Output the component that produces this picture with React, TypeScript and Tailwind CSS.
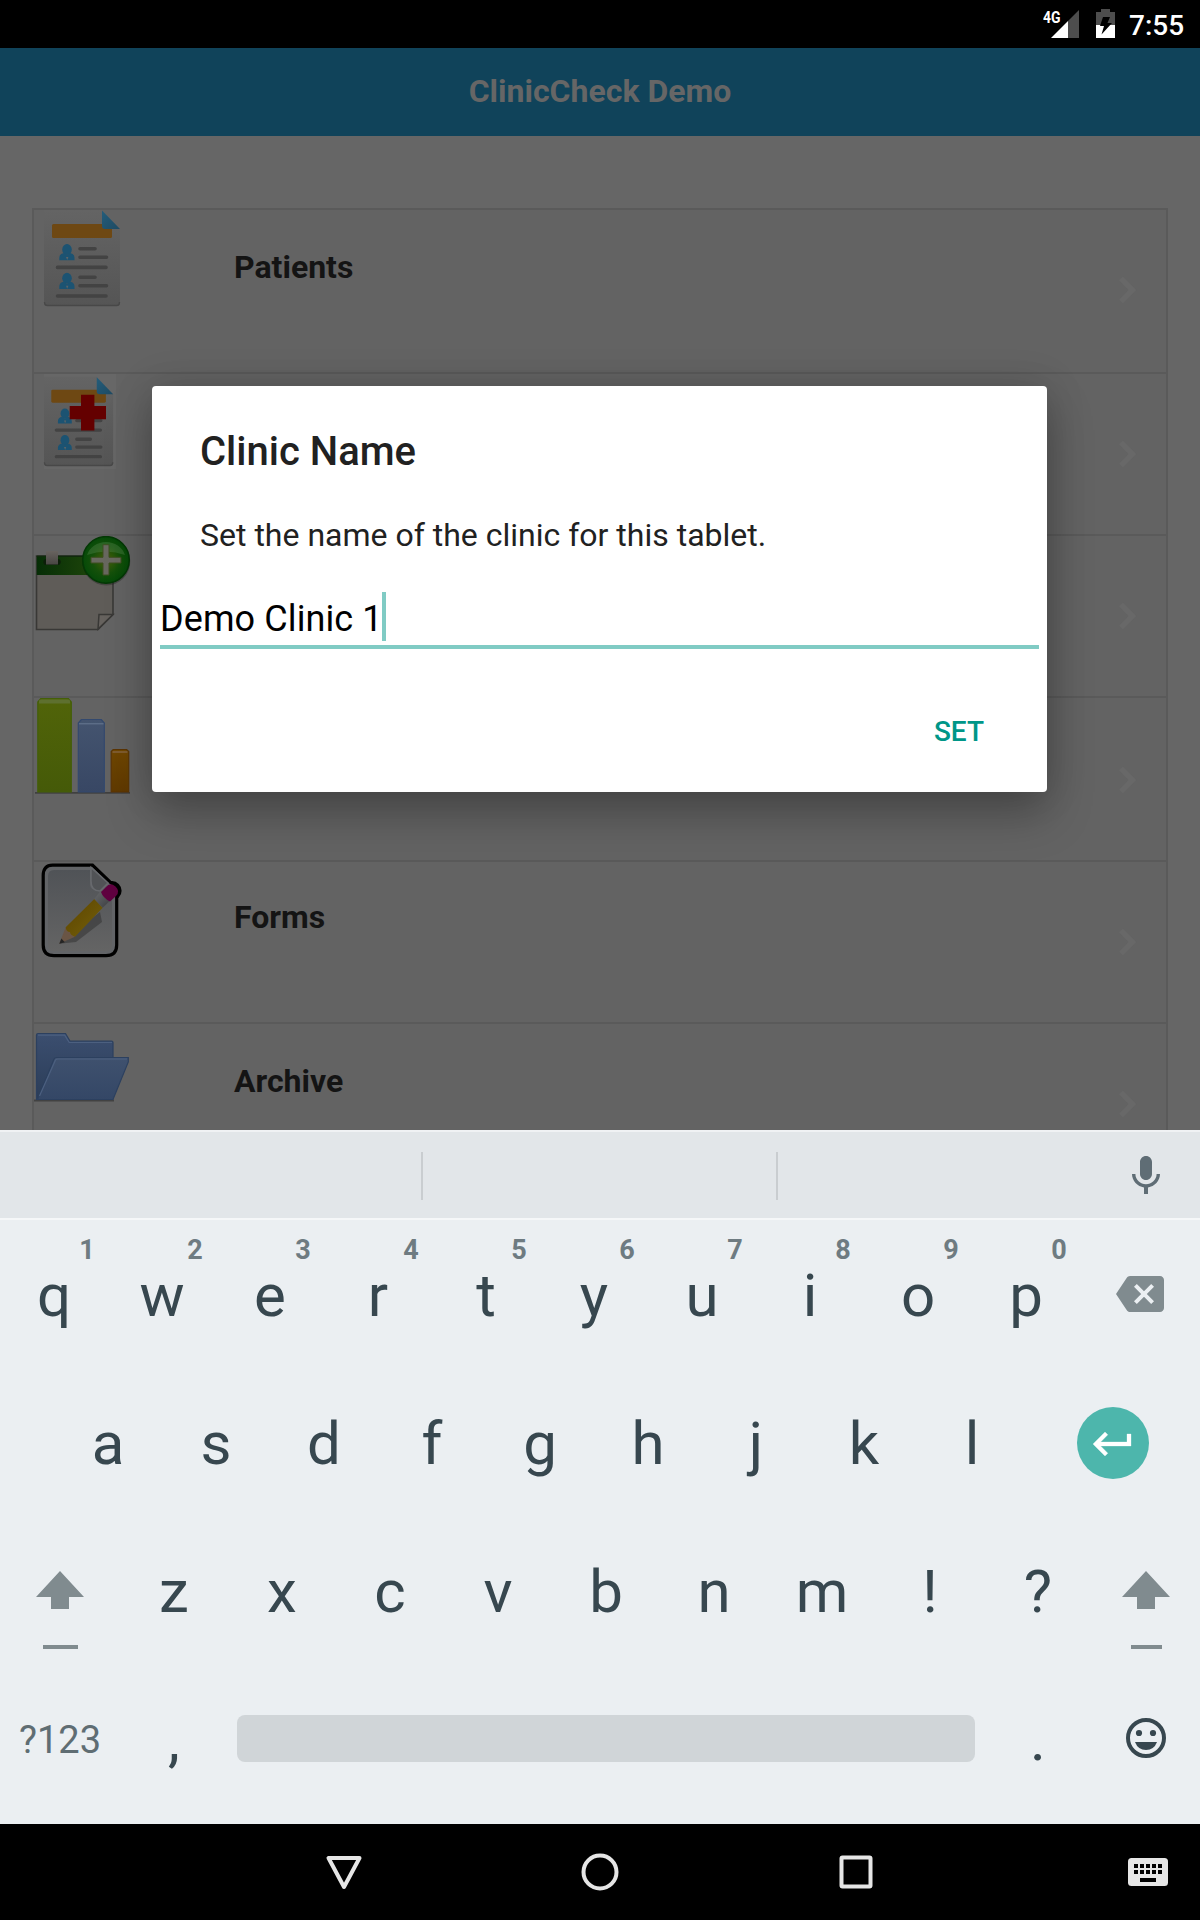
import React from "react";

function Person({ y }: { y: number }) {
  return (
    <g transform={`translate(0 ${y})`} fill="#1c5372">
      <ellipse cx="33" cy="39.5" rx="4.8" ry="5.4" />
      <path d="M25.3 50.2v-2.4q0-4 4.6-4.8l3.1 2 3.1-2q4.4.8 4.4 4.8v2.4z" />
      <path d="M32 47h2.4l-1.2 3z" fill="#5c6468" />
    </g>
  );
}

function Sheet() {
  return (
    <g>
      <path d="M10 0H68L86 19V93q0 3-3 3H13q-3 0-3-3z" fill="url(#sheet)" />
      <path d="M10.5 92q0 3.5 3 3.5h69q3 0 3-3.5" fill="none" stroke="#484848" strokeWidth="1.4" />
      <rect x="18" y="14" width="60" height="14" rx="1.5" fill="#6e4813" />
      <path d="M68 .6L86 19H71q-3 0-3-3z" fill="url(#corner)" />
      <Person y={0} />
      <Person y={28.7} />
      <path
        d="M46 38.7H61M46 47.2H72.5M23.5 57.4H72M46 67.3H61M46 75.7H72.5M23.5 86H72"
        stroke="#434343"
        strokeWidth="3.6"
        strokeLinecap="round"
      />
    </g>
  );
}

function PatientsIcon() {
  return <Sheet />;
}

function MedicalIcon() {
  return (
    <g>
      <rect x="10" y="0" width="72" height="95" fill="#676767" />
      <g transform="translate(0.9 2.7) scale(.91 .93)">
        <Sheet />
      </g>
      <path d="M47 20.7h13.4v11.3H72v13.3H60.4v11.2H47V45.3H35.7V32H47z" fill="#640000" />
    </g>
  );
}

function CalendarIcon() {
  return (
    <g>
      <path d="M2.5 20H79V78.5L64 93.5H2.5z" fill="#5f5c58" stroke="#393836" strokeWidth="1.6" />
      <path d="M2.7 20H79V39H2.7z" fill="url(#calHead)" />
      <path d="M2.7 20.2H79" stroke="#10290c" strokeWidth="1.6" />
      <path d="M64 93L65 78.5H79z" fill="#66625e" stroke="#393836" strokeWidth="1.5" />
      <rect x="9.3" y="23" width="17.4" height="6" rx="3" fill="#0c1e09" />
      <rect x="12" y="15" width="12" height="13.5" fill="url(#clip)" />
      <circle cx="72.3" cy="25.5" r="24" fill="#000" opacity=".25" />
      <circle cx="72" cy="23.9" r="23.3" fill="url(#ball)" stroke="#043805" strokeWidth="1.5" />
      <path d="M53 19a20 19 0 0 1 38 0q-19-7-38 0z" fill="#5d8c55" opacity=".35" />
      <path d="M69 8.7h6v12.6h12V27H75v12h-6V27H57v-5.7h12z" fill="#68685f" stroke="#3e4f22" strokeWidth="1" />
    </g>
  );
}

function ChartIcon() {
  return (
    <g>
      <path d="M1 94.8H96" stroke="#404040" strokeWidth="1.8" />
      <path d="M3.8 94V4l3-3.5h27.5l3 3.5v90z" fill="url(#barG)" stroke="#445f08" strokeWidth="1.2" />
      <path d="M5 5.5V2.5q0-1 2-1h27q2 0 2 1v3z" fill="#61733a" opacity=".8" />
      <path d="M44.3 94V25l3-3.5h20l3 3.5v69z" fill="url(#barB)" stroke="#33496e" strokeWidth="1.2" />
      <path d="M45 25.7h24.5" stroke="#5c6d87" strokeWidth="1.5" />
      <path d="M77.2 94V53.5l2-2h13.5l2 2V94z" fill="url(#barO)" stroke="#5c3505" strokeWidth="1.2" />
      <path d="M78.5 54h15" stroke="#85653f" strokeWidth="1.5" />
    </g>
  );
}

function FormsIcon() {
  return (
    <g>
      <circle cx="78" cy="28.7" r="9.6" fill="#000" />
      <path
        d="M18.5 3.2H58.5L76 20Q82.7 23 82.7 32V83Q82.7 93.7 72 93.7H20Q9.2 93.7 9.2 83V13.5Q9.2 3.2 18.5 3.2z"
        fill="#626467"
        stroke="#000"
        strokeWidth="3.2"
      />
      <path d="M14 14q0-6 6-6h36v14q0 6 8 6l14 4V83q0 6-6 6H20q-6 0-6-6z" fill="url(#page)" />
      <path d="M57 5.5L74 21L66 29Q57 29 57 19z" fill="#515356" stroke="#67696d" strokeWidth="1.5" />
      <path d="M25 81.7L42 80 68 60 66 50z" fill="#333" opacity=".55" />
      <path d="M25.3 81.7L31.7 65.3 41 74.7z" fill="#6a5545" />
      <path d="M25.3 81.7l2-5.2 3.6 3.7z" fill="#252525" />
      <path d="M31.7 65.3L60.3 37 68.7 45.7 41 74.7Q36 73 36 70Q32 70 31.7 65.3z" fill="url(#pencil)" />
      <path d="M60.3 37L66.7 28.7 76 38.7 68.7 45.7z" fill="url(#ferrule)" />
      <path d="M67 30L72 25Q76 20 81.5 24.5Q86.5 29.5 82 34L76 39.5Q69 36 67 30z" fill="#5f003f" />
    </g>
  );
}

function FolderIcon() {
  return (
    <g>
      <path d="M0 76.5H80" stroke="#424242" strokeWidth="2" />
      <path d="M2.5 75.5V11q0-1.5 1.5-1.5H31.5L36 17H77.5q1.5 0 1.5 1.5V60L60 75z" fill="url(#folderB)" stroke="#2c405f" strokeWidth="1.2" />
      <path d="M4 11.2H30.7l4.5 7.3H78" fill="none" stroke="#4c6080" strokeWidth="1.2" />
      <path d="M20 35q.7-1.5 2.5-1.5H94.3V38L79 75.5H3.5z" fill="url(#folderF)" stroke="#2c405f" strokeWidth="1.2" />
      <path d="M5.5 72L21.5 36Q22 35 24 35H93" fill="none" stroke="#4c6080" strokeWidth="1.2" />
    </g>
  );
}

function Gradient({ id, from, to, x2 = 0, y2 = 1 }: { id: string; from: string; to: string; x2?: number; y2?: number }) {
  return (
    <linearGradient id={id} x1="0" y1="0" x2={x2} y2={y2}>
      <stop offset="0" stopColor={from} />
      <stop offset="1" stopColor={to} />
    </linearGradient>
  );
}

function Gradients() {
  return (
    <svg width="0" height="0" className="absolute">
      <defs>
        <Gradient id="sheet" from="#646464" to="#555555" />
        <Gradient id="corner" from="#245d7b" to="#1e4a62" x2={1} />
        <Gradient id="calHead" from="#062d06" to="#264e0c" x2={1} y2={0} />
        <Gradient id="clip" from="#68635f" to="#494643" />
        <Gradient id="barG" from="#516409" to="#455a08" />
        <Gradient id="barB" from="#44546f" to="#384764" />
        <Gradient id="barO" from="#704700" to="#5f3900" />
        <Gradient id="page" from="#505357" to="#646464" />
        <Gradient id="pencil" from="#5b4300" to="#75610a" x2={1} />
        <Gradient id="ferrule" from="#6a6c6e" to="#3b3d40" x2={1} />
        <Gradient id="folderB" from="#3b4e6f" to="#2b3d58" />
        <Gradient id="folderF" from="#3f516e" to="#344766" />
        <radialGradient id="ball" cx=".5" cy=".5" r=".5">
          <stop offset="0" stopColor="#4a5f08" />
          <stop offset=".6" stopColor="#14500a" />
          <stop offset="1" stopColor="#054a08" />
        </radialGradient>
      </defs>
    </svg>
  );
}

const rows = [
  { label: "Patients", icon: PatientsIcon, row: "h-[164px]", text: "leading-[114px]", chevron: "mt-[66px]" },
  { label: "", icon: MedicalIcon, row: "h-[162px]", text: "leading-[114px]", chevron: "mt-[66px]" },
  { label: "", icon: CalendarIcon, row: "h-[162px]", text: "leading-[114px]", chevron: "mt-[66px]" },
  { label: "", icon: ChartIcon, row: "h-[164px]", text: "leading-[114px]", chevron: "mt-[68px]" },
  { label: "Forms", icon: FormsIcon, row: "h-[162px]", text: "leading-[110px]", chevron: "mt-[66px]" },
  { label: "Archive", icon: FolderIcon, row: "h-[162px]", text: "leading-[114px]", chevron: "mt-[66px]" },
];

function StatusBar() {
  return (
    <div className="flex h-12 items-start justify-end bg-black pr-4 text-white">
      <span className="mt-[9px] -mr-[10px] w-[18px] text-[17px] leading-[16px] font-bold">
        <span className="inline-block origin-left scale-x-[0.82]">4G</span>
      </span>
      <svg width="28" height="28" viewBox="0 0 28 28" className="mt-[10px]">
        <path d="M28 0V28H17V11z" fill="#4d4d4d" />
        <path d="M17 11V28H0z" fill="#fff" />
      </svg>
      <svg width="19" height="29" viewBox="0 0 19 29" className="mt-[9px] ml-[17px]">
        <path d="M5 0h9v3h5v13H0V3h5z" fill="#4d4d4d" />
        <path d="M0 16h19v13H0z" fill="#fff" />
        <path d="M7 8h7l-2.5 6H16L5.5 25.500 8 17H4z" fill="#000" />
      </svg>
      <span className="ml-[14px] w-[55px] text-[28px] leading-[51px] font-medium">7:55</span>
    </div>
  );
}

function MenuList() {
  return (
    <div className="h-[994px] overflow-hidden bg-[#666] px-8 pt-[72px]">
      <div className="border-2 border-b-0 border-[#5a5a5a] bg-[#636363]">
        {rows.map(({ label, icon: Icon, row, text, chevron }, i) => (
          <div key={i} className={`flex border-b-2 border-[#5a5a5a] ${row}`}>
            <svg width="200" height="100" viewBox="0 0 200 100">
              <Icon />
            </svg>
            <span className={`flex-1 text-[32px] font-bold text-[#141414] ${text}`}>{label}</span>
            <svg width="18" height="28" viewBox="0 0 18 28" className={`mr-[29px] ${chevron}`}>
              <path d="M2 2.300L13.400 14 2 25.700" fill="none" stroke="#686868" strokeWidth="5.400" />
            </svg>
          </div>
        ))}
      </div>
    </div>
  );
}

function Dialog() {
  return (
    <div className="absolute top-[386px] left-[152px] h-[406px] w-[895px] rounded-[4px] bg-white px-2 pt-[42px] shadow-[0_22px_46px_rgba(0,0,0,0.26),0_0_40px_rgba(0,0,0,0.14)]">
      <h2 className="pl-10 text-[40px] leading-[48px] font-medium text-[#212121]">Clinic Name</h2>
      <p className="mt-[39px] pl-10 text-[32px] leading-10 text-[#212121]">Set the name of the clinic for this tablet.</p>
      <div className="mt-[37px] flex h-[57px] items-start border-b-4 border-[#80cbc4]">
        <span className="w-[222px] text-[36px] leading-[55px] tracking-[0.1px] whitespace-nowrap text-black">Demo Clinic 1</span>
        <span className="h-[49px] w-1 bg-[#80cbc4]" />
      </div>
      <div className="mt-[63px] flex justify-end pr-[55px]">
        <button className="text-[28px] leading-10 font-medium text-[#009688]">SET</button>
      </div>
    </div>
  );
}

function Key({ char, hint }: { char: string; hint?: string }) {
  return (
    <div className="relative w-[108px] text-center text-[60px] leading-[150px] text-[#37474f]">
      {char}
      {hint && (
        <span className="absolute top-[13px] left-[67px] w-10 text-center text-[27px] leading-8 font-bold text-[#6e7b81]">{hint}</span>
      )}
    </div>
  );
}

function ShiftKey({ dash, side }: { dash: string; side: string }) {
  return (
    <div className={`flex shrink-0 flex-col items-center pt-[49px] ${side}`}>
      <svg width="48" height="38" viewBox="0 0 48 38" className="mt-[5px]">
        <path d="M24 0L48 26H33V38H15V26H0z" fill="#808b8f" />
      </svg>
      <div className={`mt-9 h-1 bg-[#808b8f] ${dash}`} />
    </div>
  );
}

function Keyboard() {
  return (
    <div className="h-[694px] bg-[#ebeff2]">
      <div className="flex h-[90px] items-start border-y-2 border-t-[#f0f2f4] border-b-[#f5f7f8] bg-[#e2e6e9]">
        <div className="mt-5 ml-[421px] h-12 w-0.5 bg-[#c9cdd0]" />
        <div className="mt-5 ml-[353px] h-12 w-0.5 bg-[#c9cdd0]" />
        <svg width="48" height="48" viewBox="0 0 24 24" className="mt-[18px] ml-[344px]" fill="#5f6d75">
          <path d="M12 15c1.66 0 2.99-1.34 2.99-3L15 6c0-1.66-1.34-3-3-3S9 4.34 9 6v6c0 1.66 1.34 3 3 3zm5.3-3c0 3-2.54 5.1-5.3 5.1S6.7 15 6.7 12H5c0 3.42 2.72 6.23 6 6.72V22h2v-3.28c3.28-.48 6-3.3 6-6.72h-1.7z" />
        </svg>
      </div>
      <div className="flex h-[148px] pt-px">
        {"qwertyuiop".split("").map((c, i) => (
          <Key key={c} char={c} hint={String((i + 1) % 10)} />
        ))}
        <svg width="48" height="48" viewBox="0 0 24 24" className="mt-[49px] ml-9" fill="#808b8f">
          <path d="M22 3H7c-.69 0-1.23.35-1.59.88L0 12l5.41 8.11c.36.53.9.89 1.59.89h15c1.1 0 2-.9 2-2V5c0-1.1-.9-2-2-2zm-3 12.59L17.59 17 14 13.41 10.41 17 9 15.59 12.59 12 9 8.41 10.41 7 14 10.59 17.59 7 19 8.41 15.41 12 19 15.59z" />
        </svg>
      </div>
      <div className="flex h-[148px] pt-px pl-[54px]">
        {"asdfghjkl".split("").map((c) => (
          <Key key={c} char={c} />
        ))}
        <div className="mt-[38px] ml-[51px] flex size-[72px] items-center justify-center rounded-full bg-[#4db6ac]">
          <svg width="48" height="48" viewBox="0 0 24 24" fill="#fff" stroke="#fff" strokeWidth=".15" className="mt-px">
            <path d="M19 7v4H5.83l3.58-3.59L8 6l-6 6 6 6 1.41-1.41L5.83 13H21V7z" />
          </svg>
        </div>
      </div>
      <div className="flex h-[148px] pt-px">
        <ShiftKey dash="w-[35px]" side="w-[120px]" />
        {"zxcvbnm!?".split("").map((c) => (
          <Key key={c} char={c} />
        ))}
        <ShiftKey dash="w-[31px]" side="w-[108px]" />
      </div>
      <div className="flex h-[148px] pt-px">
        <div className="w-[120px] text-center text-[38px] leading-[150px] text-[#5f6d73]">?123</div>
        <Key char="," />
        <div className="mt-[50px] mr-[9px] ml-[9px] h-[47px] flex-1 rounded-lg bg-[#d0d5d8]" />
        <Key char="." />
        <div className="flex w-[108px] justify-center pt-[53px]">
          <svg width="40" height="40" viewBox="0 0 40 40" fill="#37474f">
            <circle cx="20" cy="20" r="18" fill="none" stroke="#37474f" strokeWidth="4" />
            <circle cx="13" cy="15" r="3.1" />
            <circle cx="27" cy="15" r="3.1" />
            <path d="M9 24H31Q28 32 20 32T9 24z" />
          </svg>
        </div>
      </div>
    </div>
  );
}

function NavBar() {
  return (
    <div className="flex h-24 items-center bg-black">
      <svg width="38" height="38" viewBox="0 0 38 38" className="ml-[325px]">
        <path d="M3.5 5H34.5L19 34z" fill="none" stroke="#e6e6e6" strokeWidth="4" strokeLinejoin="round" />
      </svg>
      <svg width="38" height="38" viewBox="0 0 38 38" className="ml-[218px]">
        <circle cx="19" cy="19" r="16.5" fill="none" stroke="#e6e6e6" strokeWidth="4" />
      </svg>
      <svg width="34" height="34" viewBox="0 0 34 34" className="ml-[220px]">
        <rect x="2.5" y="2.5" width="29" height="29" rx="1" fill="none" stroke="#e6e6e6" strokeWidth="4" />
      </svg>
      <svg width="40" height="28" viewBox="0 0 40 28" className="ml-[255px]">
        <rect width="40" height="28" rx="3.5" fill="#e6e6e6" />
        <path d="M6 8H34M6 14H34" stroke="#000" strokeWidth="4" strokeDasharray="4 2" />
        <path d="M12 22H28" stroke="#000" strokeWidth="4" />
      </svg>
    </div>
  );
}

export default function App() {
  return (
    <div className="relative h-[1920px] w-[1200px] overflow-hidden font-['Roboto',sans-serif]">
      <Gradients />
      <StatusBar />
      <header className="h-[88px] bg-[#10435a] text-center text-[32px] leading-[87px] font-bold text-[#666]">ClinicCheck Demo</header>
      <MenuList />
      <Keyboard />
      <NavBar />
      <Dialog />
    </div>
  );
}
